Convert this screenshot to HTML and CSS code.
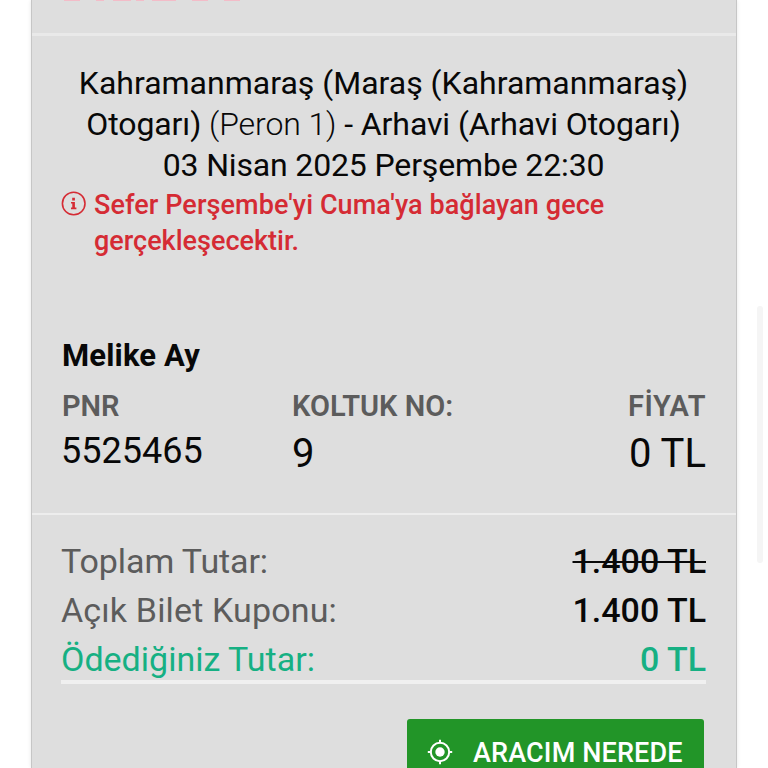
FILE: index.html
```html
<!DOCTYPE html>
<html lang="tr">
<head>
  <meta charset="UTF-8">
  <meta name="viewport" content="width=device-width, initial-scale=1.0">
  <title>Bilet Detayı</title>
  <link rel="stylesheet" href="styles.css">
</head>
<body>
  <main class="ticket">
    <div class="brand">
      <svg width="190" height="2" viewBox="0 0 190 2">
        <path d="M3 .5h16M35 .5h8M52 .5h18M75 .5h8M91 .5h24M131 .5h16M163 .5h16" stroke="#f3bcc8" stroke-width="1"/>
      </svg>
    </div>
    <section class="trip">
      <h1>
        <span class="line l1">Kahramanmaraş (Maraş (Kahramanmaraş)</span>
        <span class="line l2">Otogarı) <span class="light">(Peron 1)</span> - Arhavi (Arhavi Otogarı)</span>
        <span class="line l3">03 Nisan 2025 Perşembe 22:30</span>
      </h1>
      <div class="warning">
        <svg width="26" height="26" viewBox="0 0 26 26">
          <circle cx="12.7" cy="12.5" r="11.3" fill="none" stroke="#d52b34" stroke-width="1.6"/>
          <path d="M11.2 6.8h2.7v2.6h-2.7zM10 11h3.9v5.6h1.5v1.6H10v-1.6h1.3v-4H10z" fill="#d52b34"/>
        </svg>
        <p><span class="line w1">Sefer Perşembe'yi Cuma'ya bağlayan gece</span><span class="line w2">gerçekleşecektir.</span></p>
      </div>
    </section>
    <section class="passenger">
      <h2>Melike Ay</h2>
      <div class="info">
        <div class="pnr"><span class="label">PNR</span><span class="value">5525465</span></div>
        <div class="seat"><span class="label">KOLTUK NO:</span><span class="value">9</span></div>
        <div class="price"><span class="label">FİYAT</span><span class="value">0 TL</span></div>
      </div>
    </section>
    <section class="totals">
      <div class="row"><span class="t1">Toplam Tutar:</span><b class="old">1.400 TL</b></div>
      <div class="row"><span class="t2">Açık Bilet Kuponu:</span><b>1.400 TL</b></div>
      <div class="row paid"><span class="t3">Ödediğiniz Tutar:</span><b>0 TL</b></div>
    </section>
    <button class="track">
      <svg width="26" height="26" viewBox="0 0 26 26" fill="none" stroke="#fff" stroke-width="2">
        <circle cx="13" cy="13" r="9.2"/>
        <circle cx="13" cy="13" r="4.7" fill="#fff" stroke="none"/>
        <path d="M13 .8v3.5M13 21.7v3.5M.8 13h3.5M21.7 13h3.5"/>
      </svg>
      <span>ARACIM NEREDE</span>
    </button>
  </main>
  <div class="scrollbar"></div>
</body>
</html>
```
FILE: styles.css
```css
* {
  box-sizing: border-box;
}
body {
  margin: 0;
  height: 768px;
  overflow: hidden;
  background: #fff;
  color: #080808;
  font-family: Roboto, sans-serif;
}
h1, h2, p {
  margin: 0;
}
.ticket {
  width: 706px;
  height: 768px;
  margin-left: 31px;
  overflow: hidden;
  background: #dedede;
  border: solid #c6c6c6;
  border-width: 0 1px;
  box-shadow: 0 0 4px #e6e6e6;
}
.brand {
  height: 36px;
  padding-left: 29px;
  border-bottom: 3px solid #e9e9e9;
}
.brand svg {
  display: block;
}
.trip {
  height: 292px;
  padding: 27px 30px 0 29px;
}
.line {
  display: block;
  width: max-content;
  white-space: nowrap;
}
h1 {
  font-size: 32px;
  font-weight: 400;
  line-height: 41px;
}
h1 .line {
  margin: 0 auto;
}
.l2 {
  letter-spacing: -0.1px;
}
.l3 {
  letter-spacing: -0.15px;
}
.light {
  font-weight: 300;
}
.warning {
  display: flex;
  gap: 7px;
  padding-top: 1px;
  color: #d52b34;
  font-size: 27px;
  font-weight: 500;
  line-height: 36px;
}
.w1 {
  letter-spacing: 0.08px;
}
.warning svg {
  flex: none;
  margin-top: 4px;
}
.passenger {
  height: 187px;
  padding: 8px 30px 0 29px;
  border-bottom: 2px solid #ededed;
}
h2 {
  padding-left: 1px;
  font-size: 31px;
  font-weight: 700;
  line-height: 40px;
  letter-spacing: 0.15px;
}
.info {
  display: grid;
  grid-template-columns: 231px 1fr 1fr;
  padding-top: 11px;
}
.info span {
  display: block;
  width: max-content;
}
.label {
  color: #5c5c5c;
  font-size: 29px;
  font-weight: 600;
  line-height: 38px;
}
.pnr .label {
  padding-left: 1px;
}
.value {
  font-size: 40px;
  line-height: 58px;
}
.pnr .value {
  font-size: 36px;
  line-height: 52px;
}
.price span {
  margin-left: auto;
}
.price .label {
  letter-spacing: 0.5px;
}
.totals {
  height: 169px;
  margin: 0 30px 0 29px;
  padding-top: 22px;
  border-bottom: 4px solid #f0f0f0;
}
.row {
  display: flex;
  justify-content: space-between;
  height: 49px;
  color: #5c5c5c;
  font-size: 34px;
  line-height: 49px;
}
.row b {
  color: #080808;
  font-weight: 500;
}
.t1 {
  letter-spacing: -0.1px;
}
.t2 {
  letter-spacing: 0.15px;
}
.row .old {
  text-decoration: line-through;
  text-decoration-thickness: 2px;
}
.row.paid, .row.paid b {
  color: #16b083;
}
.track {
  display: flex;
  align-items: center;
  gap: 20px;
  width: 297px;
  height: 66px;
  margin: 35px 32px 0 auto;
  padding: 0 20px;
  border: 0;
  border-radius: 3px;
  background: #229528;
  color: #fff;
  font: 500 27px Roboto, sans-serif;
  letter-spacing: 0.15px;
  white-space: nowrap;
}
.track span {
  padding-top: 2px;
}
.scrollbar {
  position: absolute;
  top: 306px;
  right: 5px;
  width: 6px;
  height: 257px;
  border-radius: 4px;
  background: #f5f5f5;
}
```
